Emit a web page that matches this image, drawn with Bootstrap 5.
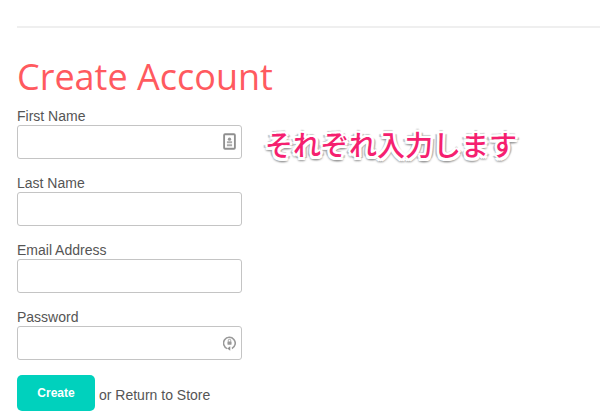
<!DOCTYPE html>
<html lang="en">
<head>
<meta charset="utf-8">
<title>Create Account</title>
<link href="https://cdn.jsdelivr.net/npm/bootstrap@5.3.0/dist/css/bootstrap.min.css" rel="stylesheet">
<style>
html,body{height:420px;overflow:hidden;background:#fff}
body{font-family:"Liberation Sans",Arial,sans-serif;color:#555;padding:26px 0 0 17px}
.top-rule{height:2px;background:#efefef;margin-bottom:24px}
.page-title{font-family:"Open Sans","Noto Sans",sans-serif;font-size:36px;line-height:50px;font-weight:400;color:#ff5a5f;margin:0 0 6px}
.form-wrap{width:225px}
.field-block{margin-bottom:16px}
.field-label{display:block;font-size:14px;line-height:17px;margin:0;color:#555}
.field-box{position:relative;height:34px}
.field-input{display:block;width:100%;height:34px;border:1px solid #c4c4c4;border-radius:3px;padding:0 30px 0 8px;background:#fff}
.field-icon{position:absolute;right:6px;top:8px;width:13px;height:17px}
.create-btn{width:78px;height:36px;background:#00d1bd;color:#fff;font-size:12px;font-weight:700;border:0;border-radius:5px;padding:0}
.create-btn:hover{background:#00d1bd;color:#fff}
.store-line{font-size:14px;color:#555;margin-top:-1px}
.store-text{padding-top:4px}
.layout{gap:23px}
.note{font-family:"Noto Sans CJK JP",sans-serif;font-size:28px;line-height:36px;color:#f5206f;font-weight:500;margin-top:18px;white-space:nowrap;
text-shadow:-2.5px 0 0 #fff,2.5px 0 0 #fff,0 -2.5px 0 #fff,0 3px 0 #fff,-2px -2px 0 #fff,2px -2px 0 #fff,-2px 3px 0 #fff,2px 3px 0 #fff,0 4px 2px #999,2px 4px 2px #aaa,-2px 4px 2px #aaa,-4px 1px 1px #bbb,4px 1px 1px #bbb,0 -3px 1px #ccc}
</style>
</head>
<body>
<div class="top-rule"></div>
<h1 class="page-title">Create Account</h1>
<div class="d-flex layout align-items-start">
<form class="form-wrap">
<div class="field-block">
<label class="field-label" for="f1">First Name</label>
<div class="field-box">
<input class="field-input" id="f1" type="text">
<svg class="field-icon" viewBox="0 0 14 18" fill="none"><rect x="1.2" y="1.2" width="11.6" height="15.6" rx="1" stroke="#8f8f8f" stroke-width="2"/><circle cx="7" cy="6.5" r="1.8" fill="#999"/><path d="M4.2 8.8h5.6v2H4.2zM4.2 12h5.6v2H4.2z" fill="#aaa"/></svg>
</div>
</div>
<div class="field-block">
<label class="field-label" for="f2">Last Name</label>
<div class="field-box"><input class="field-input" id="f2" type="text"></div>
</div>
<div class="field-block">
<label class="field-label" for="f3">Email Address</label>
<div class="field-box"><input class="field-input" id="f3" type="email"></div>
</div>
<div class="field-block">
<label class="field-label" for="f4">Password</label>
<div class="field-box">
<input class="field-input" id="f4" type="password">
<svg class="field-icon" viewBox="0 0 14 18" fill="none"><path d="M4.6 15.6A6.3 6.3 0 1 1 9.6 15.4" stroke="#999" stroke-width="1.7"/><path d="M7.8 13v4.8l-3.2-2.4z" fill="#8f8f8f"/><rect x="4.8" y="8" width="4.4" height="3.4" rx=".5" fill="#999"/><path d="M5.7 8.2V6.8a1.3 1.3 0 0 1 2.6 0v1.4" stroke="#999"/></svg>
</div>
</div>
<div class="d-flex align-items-center gap-1 store-line">
<button type="button" class="btn create-btn">Create</button>
<span class="store-text text-nowrap">or Return to Store</span>
</div>
</form>
<div class="note">それぞれ入力します</div>
</div>
<script src="https://cdn.jsdelivr.net/npm/bootstrap@5.3.0/dist/js/bootstrap.bundle.min.js"></script>
</body>
</html>
